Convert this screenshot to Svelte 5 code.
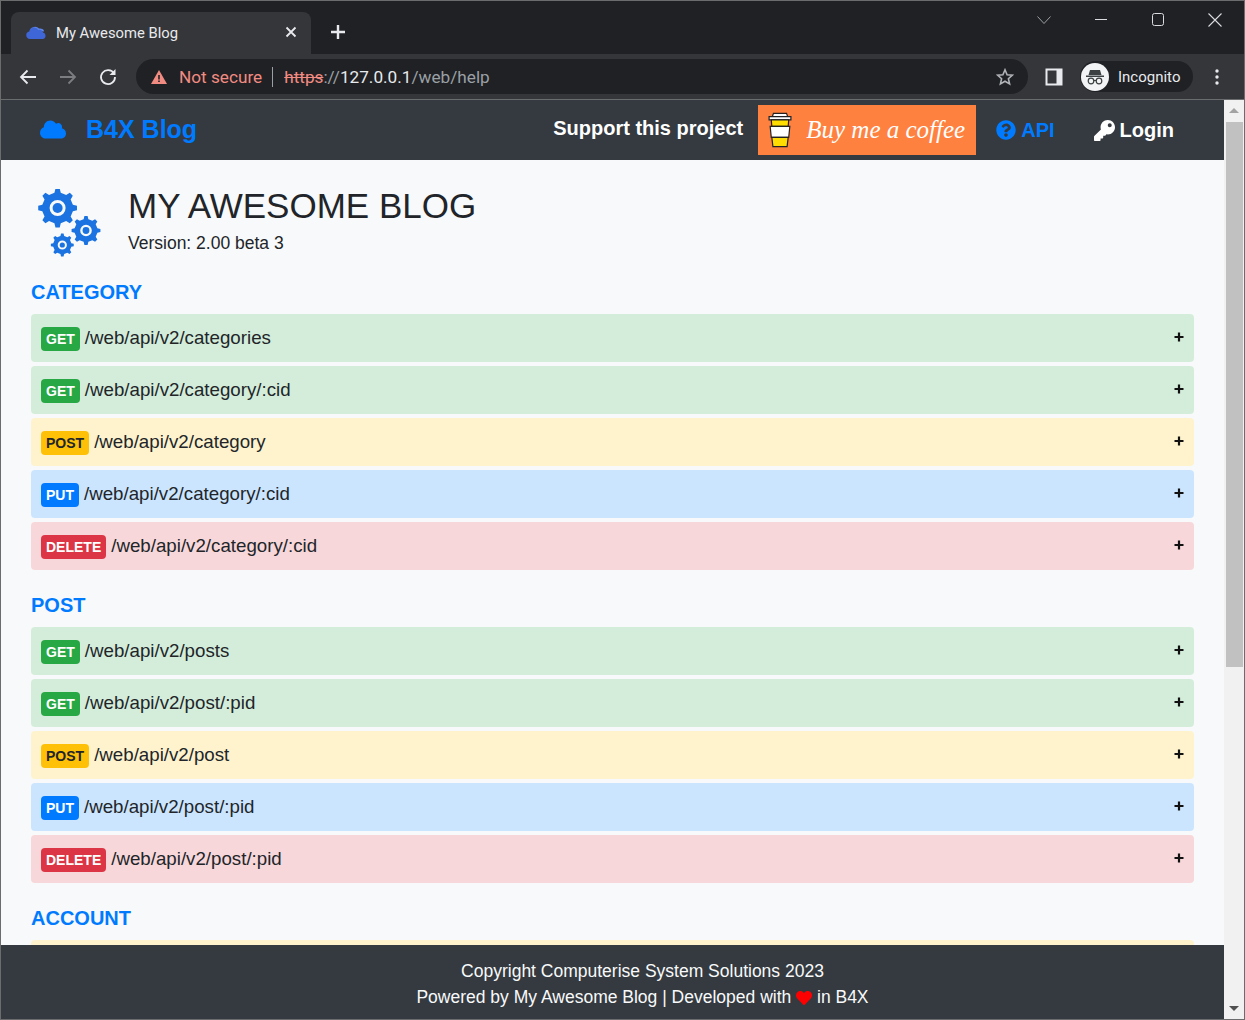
<script>
  const sections = [
    {
      title: 'CATEGORY',
      routes: [
        ['GET', '/web/api/v2/categories'],
        ['GET', '/web/api/v2/category/:cid'],
        ['POST', '/web/api/v2/category'],
        ['PUT', '/web/api/v2/category/:cid'],
        ['DELETE', '/web/api/v2/category/:cid']
      ]
    },
    {
      title: 'POST',
      routes: [
        ['GET', '/web/api/v2/posts'],
        ['GET', '/web/api/v2/post/:pid'],
        ['POST', '/web/api/v2/post'],
        ['PUT', '/web/api/v2/post/:pid'],
        ['DELETE', '/web/api/v2/post/:pid']
      ]
    },
    {
      // only the top edge of this row shows above the footer
      title: 'ACCOUNT',
      routes: [['POST', '']]
    }
  ];

  // builds a toothed gear outline with a round hole in the middle
  function gear(cx, cy, r, teeth, hole) {
    const inner = r * 0.8;
    const step = (Math.PI * 2) / teeth;
    const pts = [];
    for (let i = 0; i < teeth; i++) {
      const a = i * step;
      const w = step * 0.2;
      pts.push([a - w * 1.3, inner], [a - w * 0.7, r], [a + w * 0.7, r], [a + w * 1.3, inner]);
    }
    const outline = pts
      .map(([a, d], i) => `${i ? 'L' : 'M'}${(cx + Math.cos(a) * d).toFixed(2)} ${(cy + Math.sin(a) * d).toFixed(2)}`)
      .join('');
    return `${outline}ZM${cx - hole} ${cy}a${hole} ${hole} 0 1 0 ${hole * 2} 0a${hole} ${hole} 0 1 0 ${-hole * 2} 0Z`;
  }

  const gears = [
    { x: 19.6, y: 19, r: 19.5, hole: 8, dot: 5 },
    { x: 48, y: 41.5, r: 14.5, hole: 5.8, dot: 3.4 },
    { x: 24.3, y: 56, r: 11.5, hole: 4.6, dot: 2.6 }
  ];

  const cloud = 'M537.6 226.6c4.1-10.7 6.4-22.4 6.4-34.6 0-53-43-96-96-96-19.7 0-38.1 6-53.3 16.2C367 64.2 315.3 32 256 32c-88.4 0-160 71.6-160 160 0 2.7.1 5.4.2 8.1C40.2 219.8 0 273.2 0 336c0 79.5 64.5 144 144 144h368c70.7 0 128-57.3 128-128 0-61.9-44-113.6-102.4-125.4z';
</script>

<div class="window">
  <div class="tabstrip">
    <div class="tab">
      <svg class="favicon" viewBox="0 0 20 14" width="20" height="14">
        <path d="M4 5a5 4 0 0 1 9-1.500a4 3 0 0 1 5 3z" fill="#5f86e8" />
        <path d="M4 14a3.800 3.800 0 0 1-.8-7.500a5 5 0 0 1 9.300-1.500a3.500 3.500 0 0 1 4.500 2.500a3.300 3.300 0 0 1-.5 6.500z" fill="#3f66d6" />
      </svg>
      <span class="tab-title">My Awesome Blog</span>
      <svg class="tab-close" viewBox="0 0 12 12" width="12" height="12"><path d="M1.500 1.500l9 9M10.500 1.500l-9 9" stroke="#e8eaed" stroke-width="1.800" /></svg>
    </div>
    <svg class="newtab" viewBox="0 0 16 16" width="16" height="16"><path d="M8 1v14M1 8h14" stroke="#e8eaed" stroke-width="2.400" /></svg>
    <div class="win-buttons">
      <svg viewBox="0 0 14 8" width="14" height="8"><path d="M.5.5L7 7.500 13.500.5" fill="none" stroke="#9aa0a6" /></svg>
      <svg class="min" viewBox="0 0 12 2" width="12" height="2"><path d="M0 .5h12" stroke="#dadce0" /></svg>
      <svg class="max" viewBox="0 0 12 14" width="12" height="14"><rect x=".5" y=".5" width="11" height="12" rx="2" fill="none" stroke="#dadce0" /></svg>
      <svg class="close" viewBox="0 0 14 14" width="14" height="14"><path d="M.5.5l13 13M13.500.5l-13 13" stroke="#dadce0" stroke-width="1.100" /></svg>
    </div>
  </div>

  <div class="toolbar">
    <svg class="nav-icon" viewBox="0 0 18 16" width="18" height="16"><path d="M17 8H2M8.500 1.500L2 8l6.500 6.500" fill="none" stroke="#e8eaed" stroke-width="1.800" /></svg>
    <svg class="nav-icon" viewBox="0 0 18 16" width="18" height="16"><path d="M1 8h15M9.500 1.500L16 8l-6.500 6.500" fill="none" stroke="#7b7d80" stroke-width="1.800" /></svg>
    <svg class="nav-icon" viewBox="0 0 18 18" width="18" height="18"><path d="M15 5.500A7 7 0 1 0 16 9" fill="none" stroke="#e8eaed" stroke-width="1.800" /><path d="M16.500 1v6h-6z" fill="#e8eaed" /></svg>
    <div class="omnibox">
      <svg class="warn" viewBox="0 0 16 14" width="16" height="14"><path d="M8 0l8 14H0z" fill="#f28b82" /><path d="M7.200 5h1.600v4.500H7.200zM7.200 10.500h1.600V12H7.200z" fill="#202124" /></svg>
      <span class="not-secure">Not secure</span>
      <span class="sep"></span>
      <span class="url"><span class="scheme">https</span><span class="dim">://</span><span class="host">127.0.0.1</span><span class="dim">/web/help</span></span>
      <svg class="star" viewBox="0 0 18 18" width="18" height="18"><path d="M9 1.800l2.100 4.900 5.300.5-4 3.500 1.200 5.200L9 13.200l-4.600 2.700 1.200-5.200-4-3.500 5.300-.5z" fill="none" stroke="#b0b3b8" stroke-width="1.600" /></svg>
    </div>
    <svg class="panel" viewBox="0 0 18 18" width="18" height="18"><path d="M.5.500h17v17H.5z" fill="#e8eaed" /><path d="M2.500 2.500h9v13h-9z" fill="#35363a" /></svg>
    <div class="incognito">
      <span class="avatar">
        <svg viewBox="0 0 20 16" width="20" height="16">
          <path d="M5 1h10l1.500 5h-13zM1 6.500h18V8H1z" fill="#3c4043" />
          <circle cx="6" cy="12" r="2.800" fill="none" stroke="#3c4043" stroke-width="1.200" />
          <circle cx="14" cy="12" r="2.800" fill="none" stroke="#3c4043" stroke-width="1.200" />
          <path d="M8.800 11.500h2.400" stroke="#3c4043" stroke-width="1.200" />
        </svg>
      </span>
      <span>Incognito</span>
    </div>
    <svg class="dots" viewBox="0 0 4 16" width="4" height="16"><circle cx="2" cy="2" r="1.700" fill="#e8eaed" /><circle cx="2" cy="8" r="1.700" fill="#e8eaed" /><circle cx="2" cy="14" r="1.700" fill="#e8eaed" /></svg>
  </div>

  <div class="viewport">
    <div class="page">
      <nav class="navbar">
        <a class="brand" href="#top">
          <svg viewBox="0 0 640 512" width="26" height="21"><path d={cloud} fill="#007bff" /></svg>
          <span>B4X Blog</span>
        </a>
        <span class="support">Support this project</span>
        <a class="coffee" href="#top">
          <svg viewBox="2 3 22 31.500" width="24" height="36">
            <path d="M7 3.500h12l1 3H6z" fill="#fff" stroke="#222" stroke-width="1.100" />
            <path d="M3 6.500h20v3H3z" fill="#fff" stroke="#222" stroke-width="1.100" />
            <path d="M5 9.500h16l-.5 6h-15z" fill="#ffdd00" stroke="#222" stroke-width="1.100" />
            <path d="M4 15.500h18l-1 10H5z" fill="#fff" stroke="#222" stroke-width="1.100" />
            <path d="M5.500 25.500h15l-1 8.500h-13z" fill="#ffdd00" stroke="#222" stroke-width="1.100" />
          </svg>
          <span>Buy me a coffee</span>
        </a>
        <a class="api" href="#top">
          <svg viewBox="0 0 512 512" width="20" height="20"><path fill="#007bff" d="M504 256c0 136.997-111.043 248-248 248S8 392.997 8 256C8 119.083 119.043 8 256 8s248 111.083 248 248zM262.655 90c-54.497 0-89.255 22.957-116.549 63.758-3.536 5.286-2.353 12.415 2.715 16.258l34.699 26.310c5.205 3.947 12.621 3.008 16.665-2.122 17.864-22.658 30.113-35.797 57.303-35.797 20.429 0 45.698 13.148 45.698 32.958 0 14.976-12.363 22.667-32.534 33.976C247.128 238.528 216 254.941 216 296v4c0 6.627 5.373 12 12 12h56c6.627 0 12-5.373 12-12v-1.333c0-28.462 83.186-29.647 83.186-106.667 0-58.002-60.165-102-116.531-102zM256 338c-25.365 0-46 20.635-46 46 0 25.364 20.635 46 46 46s46-20.636 46-46c0-25.365-20.635-46-46-46z" /></svg>
          <span>API</span>
        </a>
        <a class="login" href="#top">
          <svg viewBox="0 0 512 512" width="21" height="21"><path fill="#fff" d="M512 176.001C512 273.203 433.202 352 336 352c-11.220 0-22.190-1.062-32.827-3.069l-24.012 27.014A23.999 23.999 0 0 1 261.223 384H224v40c0 13.255-10.745 24-24 24h-40v40c0 13.255-10.745 24-24 24H24c-13.255 0-24-10.745-24-24v-78.059c0-6.365 2.529-12.470 7.029-16.971l161.802-161.802C163.108 213.814 160 195.271 160 176 160 78.798 238.797.001 335.999 0 433.488-.001 512 78.511 512 176.001zM336 128c0 26.510 21.490 48 48 48s48-21.490 48-48-21.490-48-48-48-48 21.490-48 48z" /></svg>
          <span>Login</span>
        </a>
      </nav>

      <main class="content">
        <header class="head">
          <svg class="gears" viewBox="0 0 64 68" width="64" height="68" fill-rule="evenodd">
            {#each gears as g}
              <path d={gear(g.x, g.y, g.r, 8, g.hole)} fill="#1a73e0" />
              <circle cx={g.x} cy={g.y} r={g.dot} fill="#1a73e0" />
            {/each}
          </svg>
          <div>
            <h1>MY AWESOME BLOG</h1>
            <p>Version: 2.00 beta 3</p>
          </div>
        </header>

        {#each sections as section}
          <h2>{section.title}</h2>
          <div class="routes">
            {#each section.routes as [method, path]}
              <div class="route {method.toLowerCase()}">
                {#if path}
                  <span class="badge">{method}</span>
                  <span class="path">{path}</span>
                  <svg class="plus" viewBox="0 0 10 10" width="10" height="10"><path d="M5 .5v9M.5 5h9" stroke="#111" stroke-width="2.200" /></svg>
                {/if}
              </div>
            {/each}
          </div>
        {/each}
      </main>

      <footer class="footer">
        <div>Copyright Computerise System Solutions 2023</div>
        <div>Powered by My Awesome Blog | Developed with
          <svg viewBox="0 0 512 512" width="16" height="16"><path fill="#ff0000" d="M462.300 62.600C407.500 15.900 326 24.300 275.700 76.200L256 96.500l-19.700-20.300C186.100 24.300 104.500 15.900 49.700 62.600c-62.800 53.600-66.100 149.800-9.900 207.900l193.500 199.800c12.500 12.900 32.800 12.900 45.300 0l193.500-199.800c56.300-58.100 53-154.300-9.800-207.900z" /></svg>
          in B4X</div>
      </footer>
    </div>

    <div class="scrollbar">
      <span class="arrow up"></span>
      <div class="track"><div class="thumb"></div></div>
      <span class="arrow down"></span>
    </div>
  </div>
</div>

<style>
  :global(body) {
    margin: 0;
    background: #202124;
  }

  .window {
    width: 1245px;
    height: 1020px;
    box-sizing: border-box;
    border: 1px solid #6b6c6e;
    display: flex;
    flex-direction: column;
    font-family: "Liberation Sans", Arial, sans-serif;
    overflow: hidden;
  }

  svg {
    display: block;
    flex: none;
  }

  /* browser chrome */
  .tabstrip {
    height: 53px;
    flex: none;
    background: #202124;
    display: flex;
    align-items: flex-end;
    padding-left: 10px;
  }

  .tab {
    width: 300px;
    height: 42px;
    box-sizing: border-box;
    background: #35363a;
    border-radius: 8px 8px 0 0;
    display: flex;
    align-items: center;
    padding: 0 14px 2px 15px;
    color: #e8eaed;
    font-family: Roboto, sans-serif;
    font-size: 14.8px;
  }

  .tab-title {
    margin: 1px 0 0 10px;
    flex: 1;
  }

  .newtab {
    margin: 0 0 14px 19px;
  }

  .win-buttons {
    margin-left: auto;
    align-self: flex-start;
    display: flex;
    align-items: center;
    height: 38px;
    padding-right: 22px;
  }

  .win-buttons .min {
    margin-left: 44px;
  }

  .win-buttons .max {
    margin-left: 45px;
  }

  .win-buttons .close {
    margin-left: 44px;
  }

  .toolbar {
    height: 46px;
    flex: none;
    box-sizing: border-box;
    background: #35363a;
    border-bottom: 1px solid #6b6c6e;
    display: flex;
    align-items: center;
    padding: 0 0 0 18px;
  }

  .nav-icon {
    margin-right: 22px;
  }

  .omnibox {
    width: 892px;
    height: 35px;
    margin-left: -3px;
    background: #202124;
    border-radius: 18px;
    display: flex;
    align-items: center;
    box-sizing: border-box;
    padding: 0 14px 0 15px;
    font-family: Roboto, sans-serif;
    font-size: 17.2px;
  }

  .not-secure {
    color: #f28b82;
    margin-left: 12px;
  }

  .sep {
    width: 1px;
    height: 20px;
    background: #9aa0a6;
    margin: 0 11px 0 10px;
  }

  .url {
    flex: 1;
  }

  .scheme {
    color: #f28b82;
    text-decoration: line-through;
  }

  .dim {
    color: #9aa0a6;
  }

  .host {
    color: #e8eaed;
  }

  .panel {
    margin-left: 17px;
  }

  .incognito {
    margin-left: 17px;
    width: 113px;
    height: 31px;
    box-sizing: border-box;
    background: #202124;
    border-radius: 16px;
    display: flex;
    align-items: center;
    gap: 9px;
    padding-left: 1px;
    color: #e8eaed;
    font-family: Roboto, sans-serif;
    font-size: 15px;
  }

  .avatar {
    width: 28px;
    height: 28px;
    border-radius: 50%;
    background: #f1f3f4;
    display: flex;
    align-items: center;
    justify-content: center;
  }

  .dots {
    margin-left: 22px;
  }

  /* page */
  .viewport {
    flex: 1;
    min-height: 0;
    display: flex;
  }

  .page {
    flex: 1;
    min-width: 0;
    display: flex;
    flex-direction: column;
    background: #f8f9fa;
  }

  .navbar {
    height: 60px;
    flex: none;
    background: #343a40;
    display: flex;
    align-items: center;
    padding-left: 39px;
  }

  a {
    text-decoration: none;
  }

  .brand {
    display: flex;
    align-items: center;
    gap: 20px;
    color: #007bff;
    font-size: 25px;
    font-weight: 700;
    margin: 0 auto 2px 0;
  }

  .support {
    color: #fff;
    font-size: 20px;
    font-weight: 700;
    margin: 0 15px 4px 0;
  }

  .coffee {
    width: 218px;
    height: 50px;
    box-sizing: border-box;
    background: #ff813f;
    display: flex;
    align-items: center;
    gap: 14px;
    padding-left: 10px;
    color: #fff;
    font-family: "Liberation Serif", serif;
    font-style: italic;
    font-size: 25px;
    white-space: nowrap;
  }

  .api,
  .login {
    display: flex;
    align-items: center;
    gap: 5px;
    font-size: 20px;
    font-weight: 700;
  }

  .api {
    color: #007bff;
    margin-left: 20px;
  }

  .login {
    color: #fff;
    margin: 0 50px 0 39px;
  }

  .content {
    flex: 1;
    min-height: 0;
    overflow: hidden;
    padding: 0 30px;
  }

  .head {
    display: flex;
    gap: 26px;
    padding: 29px 0 0 7px;
    color: #212529;
  }

  h1 {
    margin: 0;
    font-size: 35px;
    font-weight: 400;
    line-height: 34px;
  }

  .head p {
    margin: 10px 0 0;
    font-size: 17.5px;
    line-height: 21px;
  }

  h2 {
    margin: 22px 0 9px;
    color: #007bff;
    font-size: 20px;
    font-weight: 700;
    line-height: 26px;
  }

  .routes {
    display: flex;
    flex-direction: column;
    gap: 4px;
  }

  .route {
    height: 48px;
    flex: none;
    box-sizing: border-box;
    border-radius: 4px;
    display: flex;
    align-items: center;
    padding: 0 10px;
    color: #212529;
    font-size: 18.72px;
  }

  .path {
    flex: 1;
    margin-left: 5px;
  }

  .plus {
    margin-top: -2px;
  }

  .badge {
    height: 24px;
    box-sizing: border-box;
    border-radius: 4px;
    padding: 0 5px;
    font-size: 14px;
    font-weight: 700;
    line-height: 24px;
    color: #fff;
    margin-top: 2px;
  }

  .get {
    background: #d4edda;
  }

  .get .badge {
    background: #28a745;
  }

  .post {
    background: #fff3cd;
  }

  .post .badge {
    background: #ffc107;
    color: #212529;
  }

  .put {
    background: #cce5ff;
  }

  .put .badge {
    background: #007bff;
  }

  .delete {
    background: #f8d7da;
  }

  .delete .badge {
    background: #dc3545;
  }

  .footer {
    height: 74px;
    flex: none;
    box-sizing: border-box;
    background: #343a40;
    color: #f8f9fa;
    font-size: 17.5px;
    line-height: 26px;
    padding: 13px 0 0 60px;
    text-align: center;
  }

  .footer svg {
    display: inline-block;
    vertical-align: -3px;
  }

  .scrollbar {
    width: 20px;
    flex: none;
    background: #f1f1f1;
    display: flex;
    flex-direction: column;
    align-items: center;
  }

  .track {
    flex: 1;
    width: 100%;
  }

  .thumb {
    height: 545px;
    margin: 3px 1px 0 2px;
    background: #c1c1c1;
  }

  .arrow {
    width: 0;
    height: 0;
    border-left: 5px solid transparent;
    border-right: 5px solid transparent;
    flex: none;
  }

  .arrow.up {
    border-bottom: 5px solid #a3a3a3;
    margin-top: 8px;
    margin-bottom: 6px;
  }

  .arrow.down {
    border-top: 5px solid #505050;
    margin-bottom: 8px;
  }
</style>
